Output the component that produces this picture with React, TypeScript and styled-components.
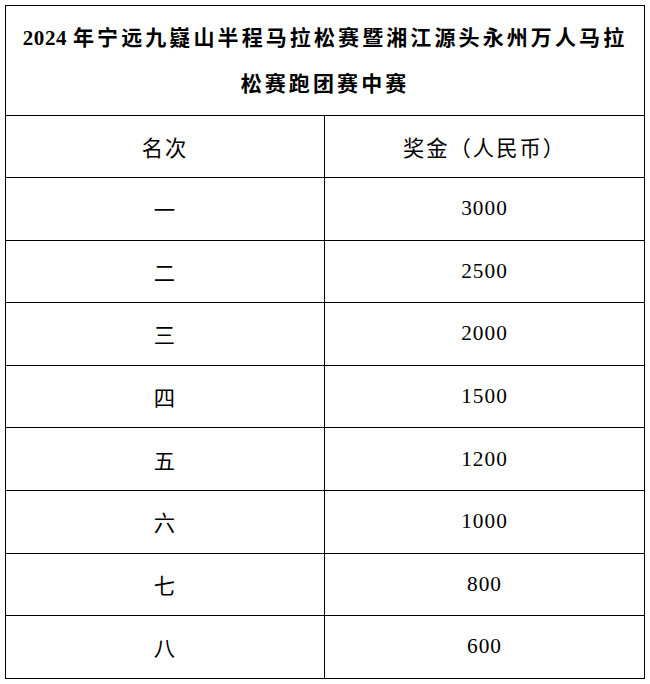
import * as React from 'react';
import styled, { createGlobalStyle } from 'styled-components';

const GlobalStyle = createGlobalStyle`
  html, body {
    margin: 0;
    padding: 0;
    background: #fff;
  }
  body {
    font-family: "Liberation Serif", "Noto Sans CJK SC", serif;
    color: #000;
  }
`;

// the page is just one bordered prize table
const Page = styled.div`
  padding: 5px 0 0 5px;
`;

const Table = styled.table`
  width: 639px;
  border-collapse: collapse;
  table-layout: fixed;
  font-family: "Liberation Serif", "Noto Sans CJK SC", serif;
`;

const TitleCell = styled.td`
  height: 110px;
  padding: 0;
  border: 1px solid #000;
  text-align: center;
  vertical-align: middle;
  font-size: 21px;
  font-weight: 700;
  line-height: 46px;
  letter-spacing: 3.1px;
  white-space: nowrap;
  box-sizing: border-box;
`;

const Year = styled.span`
  letter-spacing: 0.6px;
`;

const Cell = styled.td<{ $head?: boolean }>`
  height: ${(p) => (p.$head ? '62px' : '62.6px')};
  padding: 0;
  border: 1px solid #000;
  text-align: center;
  vertical-align: middle;
  font-size: 21.3px;
  font-weight: 400;
  letter-spacing: ${(p) => (p.$head ? '2px' : '1px')};
  box-sizing: border-box;
`;

const prizes: [string, string][] = [
  ['一', '3000'],
  ['二', '2500'],
  ['三', '2000'],
  ['四', '1500'],
  ['五', '1200'],
  ['六', '1000'],
  ['七', '800'],
  ['八', '600'],
];

const App: React.FC = () => {
  return (
    <Page>
      <GlobalStyle />
      <Table>
        <colgroup>
          <col style={{ width: 319 }} />
          <col style={{ width: 320 }} />
        </colgroup>
        <tbody>
          <tr>
            <TitleCell colSpan={2}>
              <Year>2024 </Year>年宁远九嶷山半程马拉松赛暨湘江源头永州万人马拉
              <br />
              松赛跑团赛中赛
            </TitleCell>
          </tr>
          <tr>
            <Cell $head>名次</Cell>
            <Cell $head>奖金（人民币）</Cell>
          </tr>
          {prizes.map(([rank, amount]) => (
            <tr key={rank}>
              <Cell>{rank}</Cell>
              <Cell>{amount}</Cell>
            </tr>
          ))}
        </tbody>
      </Table>
    </Page>
  );
};

export default App;
